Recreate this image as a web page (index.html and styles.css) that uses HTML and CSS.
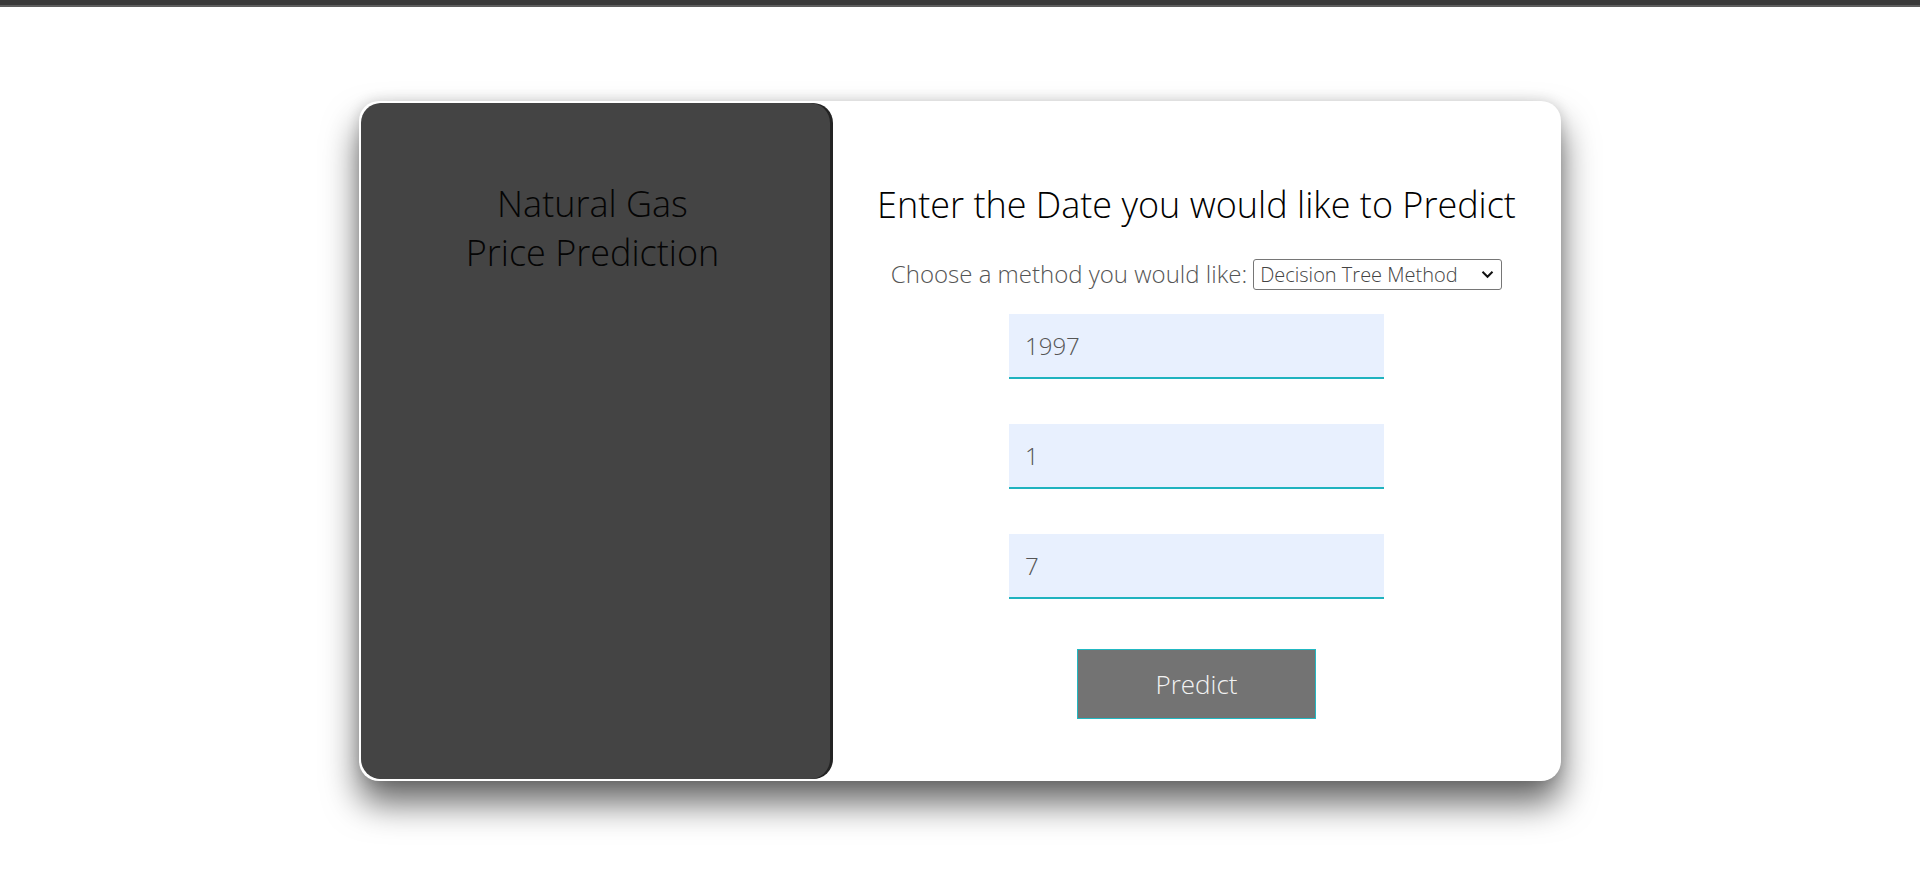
FILE: index.html
```html
<!DOCTYPE html>
<html lang="en">
<head>
<meta charset="utf-8">
<title>Natural Gas Price Prediction</title>
<link rel="stylesheet" href="styles.css">
</head>
<body>
<div class="topbar"></div>
<main class="page">
  <div class="card">
    <aside class="side">
      <h1 class="side-title">Natural Gas<br>Price Prediction</h1>
    </aside>
    <section class="form-area">
      <h2 class="form-title">Enter the Date you would like to Predict</h2>
      <div class="method-row">
        <label class="method-label" for="method">Choose a method you would like:</label>
        <div class="select-box">
          <select id="method" class="method-select">
            <option>Decision Tree Method</option>
          </select>
          <svg class="chev" width="13" height="9" viewBox="0 0 13 9"><path d="M1.5 1.8 L6.5 6.8 L11.5 1.8" fill="none" stroke="#111" stroke-width="2"/></svg>
        </div>
      </div>
      <div class="fields">
        <input class="field" type="text" value="1997">
        <input class="field" type="text" value="1">
        <input class="field" type="text" value="7">
      </div>
      <button class="predict" type="button">Predict</button>
    </section>
  </div>
</main>
</body>
</html>
```
FILE: styles.css
```css
* { box-sizing: border-box; }
html, body { margin: 0; padding: 0; background: #fff; }
body {
  font-family: "Open Sans", "DejaVu Sans", sans-serif;
  min-height: 100vh;
}

.topbar {
  height: 7px;
  background: #3a3a3a;
  border-bottom: 2px solid #5e5e5e;
}

.page {
  display: flex;
  justify-content: center;
  align-items: flex-start;
  padding-top: 94px;
  min-height: calc(100vh - 7px);
}

.card {
  width: 1202px;
  height: 680px;
  background: #fff;
  border-radius: 20px;
  display: flex;
  padding: 2px;
  box-shadow: 0 22px 35px rgba(0, 0, 0, 0.6), 0 0 14px rgba(0, 0, 0, 0.14);
}

.side {
  width: 469px;
  flex: none;
  background: #444;
  border-radius: 20px;
  box-shadow: 3px 0 0 #232323;
  padding-top: 76px;
  padding-right: 6px;
  text-align: center;
}

.side-title {
  margin: 0;
  font-weight: 300;
  font-size: 36px;
  line-height: 49px;
  color: #050505;
}

.form-area {
  flex: 1;
  display: flex;
  flex-direction: column;
  align-items: center;
  padding-top: 78px;
  padding-left: 4px;
}

.form-title {
  margin: 0;
  font-weight: 300;
  font-size: 36px;
  line-height: 48px;
  color: #000;
}

.method-row {
  margin-top: 29px;
  display: flex;
  align-items: center;
  gap: 6px;
}

.method-label {
  font-size: 24px;
  font-weight: 300;
  color: #555;
  line-height: 32px;
}

.select-box {
  position: relative;
  width: 249px;
  height: 31px;
}

.method-select {
  -webkit-appearance: none;
  appearance: none;
  width: 100%;
  height: 100%;
  border: 1px solid #767676;
  border-radius: 3px;
  background: #fff;
  font-family: "Open Sans", "DejaVu Sans", sans-serif;
  font-size: 20px;
  font-weight: 300;
  color: #444;
  padding: 0 0 0 6px;
}

.chev {
  position: absolute;
  right: 8px;
  top: 11px;
  pointer-events: none;
}

.fields {
  margin-top: 24px;
  display: flex;
  flex-direction: column;
  gap: 45px;
}

.field {
  display: block;
  width: 375px;
  height: 65px;
  border: none;
  border-bottom: 2px solid #1fb3bf;
  background: #e8f0fe;
  padding: 0 16px;
  font-family: "Open Sans", "DejaVu Sans", sans-serif;
  font-size: 24px;
  font-weight: 300;
  color: #555;
  outline: none;
}

.predict {
  margin-top: 50px;
  width: 239px;
  height: 70px;
  background: #737373;
  border: 1px solid #22b8c2;
  color: #f2f2f2;
  font-family: "Open Sans", "DejaVu Sans", sans-serif;
  font-size: 26px;
  font-weight: 300;
  cursor: pointer;
}
```
